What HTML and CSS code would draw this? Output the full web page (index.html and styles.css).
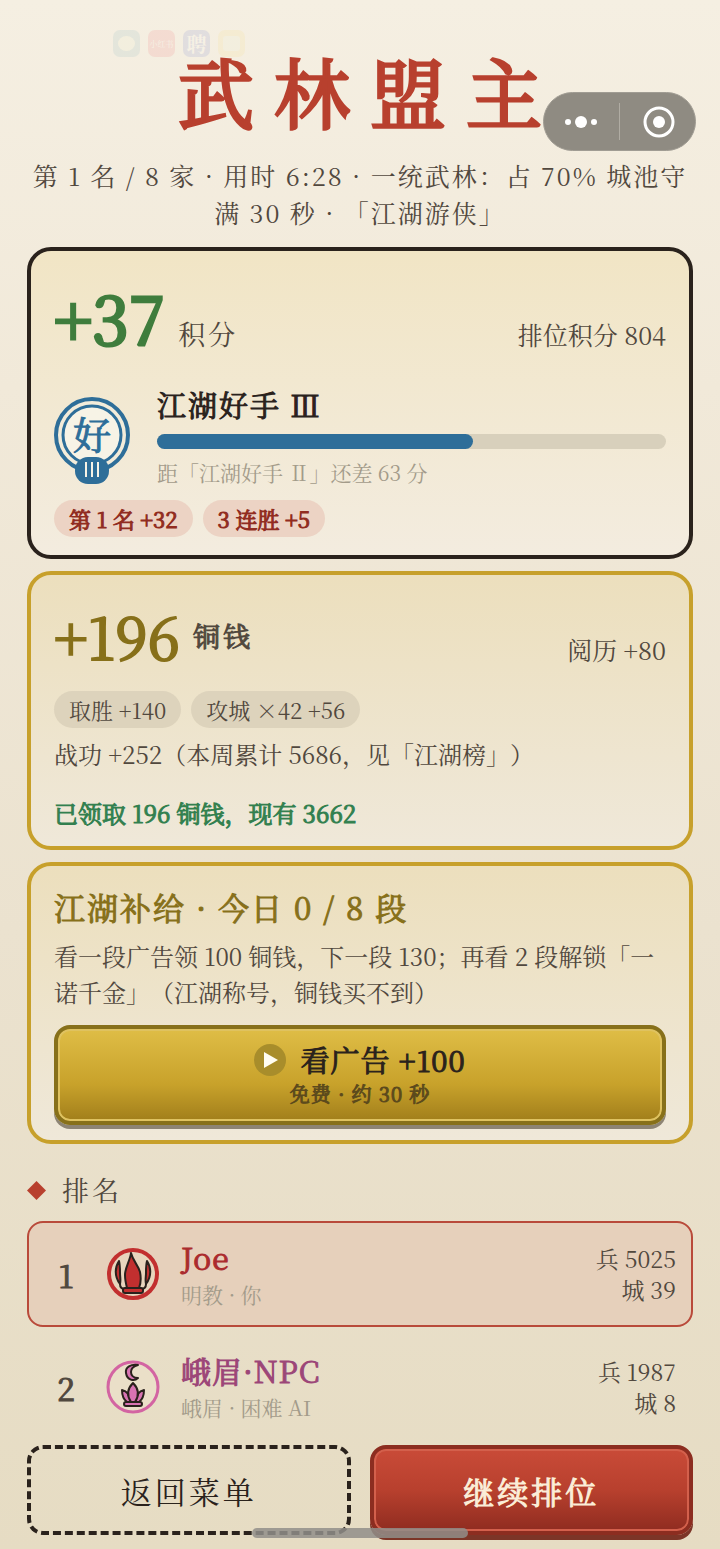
FILE: index.html
```html
<!DOCTYPE html>
<html lang="zh-CN">
<head>
    <meta charset="UTF-8">
    <meta name="viewport" content="width=device-width, initial-scale=1.0">
    <title>武林盟主</title>
    <link rel="stylesheet" href="styles.css">
</head>
<body>
    <!-- Faded status icons -->
    <div class="status-icons" aria-hidden="true">
        <span class="app app-teal"><i></i></span>
        <span class="app app-red">小红书</span>
        <span class="app app-blue">聘</span>
        <span class="app app-yellow"><i></i></span>
    </div>

    <div class="capsule">
        <button class="capsule-btn" aria-label="更多">
            <svg width="34" height="14" viewBox="0 0 34 14" fill="#fff">
                <circle cx="3" cy="7" r="3"/>
                <circle cx="16" cy="7" r="6"/>
                <circle cx="29" cy="7" r="3"/>
            </svg>
        </button>
        <button class="capsule-btn" aria-label="关闭">
            <svg width="34" height="34" viewBox="0 0 34 34">
                <circle cx="18" cy="17" r="14" fill="none" stroke="#fff" stroke-width="3"/>
                <circle cx="18" cy="17" r="6" fill="#fff"/>
            </svg>
        </button>
    </div>

    <main class="page">
        <header class="header">
            <h1>武林盟主</h1>
            <p>第 1 名 / 8 家 · 用时 6:28 · 一统武林：占 70% 城池守满 30 秒 · 「江湖游侠」</p>
        </header>

        <section class="card card-score">
            <div class="card-head">
                <div class="gain">
                    <strong class="gain-num">+37</strong>
                    <span class="gain-unit">积分</span>
                </div>
                <span class="head-note">排位积分 804</span>
            </div>
            <div class="rank">
                <svg class="badge" width="76" height="90" viewBox="0 0 76 90">
                    <circle cx="38" cy="38" r="36" fill="#f3ecda" stroke="#2e6e99" stroke-width="4"/>
                    <circle cx="38" cy="38" r="29" fill="#f7f3e6" stroke="#2e6e99" stroke-width="3"/>
                    <text class="badge-text" x="38" y="52" text-anchor="middle">好</text>
                    <rect x="21" y="60" width="34" height="27" rx="13" fill="#2e6e99"/>
                    <path d="M32 65v15M38 65v15M44 65v15" stroke="#f7f3e6" stroke-width="2"/>
                </svg>
                <div class="rank-info">
                    <h2>江湖好手 Ⅲ</h2>
                    <div class="bar"><div class="bar-fill" style="width: 62%"></div></div>
                    <p>距「江湖好手 Ⅱ」还差 63 分</p>
                </div>
            </div>
            <div class="tags">
                <span class="tag tag-red">第 1 名 +32</span>
                <span class="tag tag-red">3 连胜 +5</span>
            </div>
        </section>

        <section class="card card-coins">
            <div class="card-head">
                <div class="gain">
                    <strong class="gain-num">+196</strong>
                    <span class="gain-unit">铜钱</span>
                </div>
                <span class="head-note">阅历 +80</span>
            </div>
            <div class="tags">
                <span class="tag">取胜 +140</span>
                <span class="tag">攻城 ×42 +56</span>
            </div>
            <p class="merit">战功 +252（本周累计 5686，见「江湖榜」）</p>
            <p class="claimed">已领取 196 铜钱，现有 3662</p>
        </section>

        <section class="card card-supply">
            <h2>江湖补给 · 今日 0 / 8 段</h2>
            <p>看一段广告领 100 铜钱，下一段 130；再看 2 段解锁「一诺千金」（江湖称号，铜钱买不到）</p>
            <button class="btn-ad">
                <span class="btn-ad-main">
                    <svg width="32" height="32" viewBox="0 0 32 32">
                        <circle cx="16" cy="16" r="16" fill="#a88d2b"/>
                        <path d="M10 8v16l14-8z" fill="#fffdf2"/>
                    </svg>
                    看广告 +100
                </span>
                <small>免费 · 约 30 秒</small>
            </button>
        </section>

        <h3 class="list-title">
            <svg width="19" height="19" viewBox="0 0 20 20"><path d="M10 0L20 10 10 20 0 10z" fill="#b8402e"/></svg>
            排名
        </h3>
        <ol class="ranking">
            <li class="row row-me">
                <span class="place">1</span>
                <svg class="sect" width="54" height="54" viewBox="0 0 54 54">
                    <circle cx="27" cy="27" r="24" fill="#e8d5bd" stroke="#c22f2f" stroke-width="4"/>
                    <g fill="#c22f2f" stroke="#2a211c" stroke-width="2" stroke-linejoin="round" stroke-linecap="round">
                        <path d="M13 14c-4 6-5 15 1 23 1-4 0-7 0-11 0-5 0-8-1-12z"/>
                        <path d="M41 14c4 6 5 15-1 23-1-4 0-7 0-11 0-5 0-8 1-12z"/>
                        <path d="M14 37c0 3 2 5 5 5M40 37c0 3-2 5-5 5" fill="none"/>
                        <path d="M25 6c-1 8-6 14-6 22 0 5 1 9 2 13h12c2-5 2-11 1-16-2-7-7-11-9-19z"/>
                        <rect x="17" y="41" width="20" height="5" rx="2"/>
                    </g>
                </svg>
                <div class="who">
                    <strong class="name-red">Joe</strong>
                    <small>明教 · 你</small>
                </div>
                <div class="stats"><span>兵 5025</span><span>城 39</span></div>
            </li>
            <li class="row">
                <span class="place">2</span>
                <svg class="sect" width="54" height="54" viewBox="0 0 54 54">
                    <circle cx="27" cy="27" r="25" fill="#eadfc8" stroke="#d364a2" stroke-width="3"/>
                    <g fill="#d873b2" stroke="#2a211c" stroke-width="2" stroke-linejoin="round">
                        <path d="M32 5c-7-1-13 2-12 8 1 7 8 9 12 5-5 0-7-3-7-6 0-4 3-6 7-7z"/>
                        <path d="M21 42c-4-3-5-7-5-12 5 1 8 5 9 12zM33 42c4-3 5-7 5-12-5 1-8 5-9 12z"/>
                        <path d="M27 23c-6 6-6 13-2 19h4c4-6 4-13-2-19z"/>
                        <rect x="18" y="42" width="18" height="4" rx="2"/>
                    </g>
                </svg>
                <div class="who">
                    <strong class="name-pink">峨眉·NPC</strong>
                    <small>峨眉 · 困难 AI</small>
                </div>
                <div class="stats"><span>兵 1987</span><span>城 8</span></div>
            </li>
        </ol>

        <footer class="actions">
            <button class="btn btn-back">返回菜单</button>
            <button class="btn btn-next">继续排位</button>
        </footer>
    </main>
    <div class="home-bar"></div>
</body>
</html>
```

FILE: styles.css
```css
:root {
    --ink: #2a221c;
    --text: #51483e;
    --muted: #a39b8a;
    --red: #b8402e;
    --gold: #c7a02b;
    --dark-gold: #87701a;
    --green: #3f7d3d;
    --blue: #2e6e99;
}

* {
    box-sizing: border-box;
}

body {
    margin: 0;
    min-height: 100vh;
    position: relative;
    font-family: "Noto Serif CJK SC", "Source Han Serif SC", "Liberation Serif", "Noto Sans CJK SC", serif;
    text-spacing-trim: space-all;
    color: var(--text);
    background: linear-gradient(#f5efe2, #f1e9d9 25%, #ebe2cf 60%, #e6dcc3);
}

h1, h2, h3, p, ol {
    margin: 0;
    padding: 0;
    font-weight: normal;
}

button {
    font-family: inherit;
    cursor: pointer;
}

/* Even, brush-like bold: regular glyphs with a thin outline */
h2, strong, .tag-red, .claimed, .badge-text, .place, .card-coins .gain-unit,
.btn-ad-main, .btn-ad small, .btn-next {
    font-weight: normal;
    -webkit-text-stroke: 1px;
}

.page {
    padding: 49px 27px 14px;
}

/* Overlays */
.status-icons {
    position: absolute;
    top: 30px;
    left: 113px;
    display: flex;
    gap: 8px;
    opacity: 0.12;
}

.app {
    display: flex;
    align-items: center;
    justify-content: center;
    width: 27px;
    height: 27px;
    border-radius: 7px;
    color: #fff;
    font-size: 8px;
    line-height: 1;
    white-space: nowrap;
}

.app i {
    width: 17px;
    height: 15px;
    border-radius: 50%;
    background: #e9f5c9;
}

.app-teal { background: #6fa7b7; }
.app-red { background: #ef5a64; }
.app-blue { background: #5968cf; font-size: 20px; font-weight: bold; }
.app-yellow { background: #f8d869; }
.app-yellow i { border-radius: 3px; }

.capsule {
    position: absolute;
    top: 92px;
    right: 24px;
    display: flex;
    width: 153px;
    height: 59px;
    padding: 10px 0;
    border-radius: 30px;
    background: #8f8b82;
    border: 1px solid #a09c93;
}

.capsule-btn {
    flex: 1;
    display: flex;
    align-items: center;
    justify-content: center;
    padding: 0;
    border: none;
    background: none;
}

.capsule-btn + .capsule-btn {
    border-left: 1px solid #b0aca3;
}

.home-bar {
    position: absolute;
    bottom: 11px;
    left: 35%;
    width: 30%;
    height: 10px;
    border-radius: 5px;
    background: rgba(145, 142, 138, 0.85);
}

/* Header */
.header {
    text-align: center;
    margin-bottom: 16px;
}

h1 {
    font-size: 76px;
    line-height: 84px;
    letter-spacing: 20px;
    text-indent: 20px;
    color: var(--red);
    -webkit-text-stroke: 3px;
}

.header p {
    margin-top: 24px;
    font-size: 25px;
    line-height: 37px;
    letter-spacing: 2px;
}

/* Cards */
.card {
    padding: 18px 23px;
    margin-bottom: 12px;
    border: 4px solid var(--gold);
    border-radius: 24px;
    background: linear-gradient(#ecdfbd, #efe8d9);
}

.card-score {
    border-color: var(--ink);
    background: linear-gradient(#f1e5c5, #f3ecdf);
}

.card-head {
    display: flex;
    justify-content: space-between;
    align-items: baseline;
}

.gain {
    display: flex;
    align-items: baseline;
    gap: 13px;
}

.gain-num {
    font-size: 66px;
    line-height: 96px;
    color: var(--green);
    -webkit-text-stroke: 3px;
}

.gain-unit {
    font-size: 27px;
    letter-spacing: 3px;
}

.head-note {
    font-size: 25px;
}

.rank {
    display: flex;
    align-items: flex-end;
    gap: 27px;
    margin-top: 19px;
}

.badge-text {
    font-size: 38px;
    fill: var(--blue);
    stroke: var(--blue);
}

.rank-info {
    flex: 1;
}

.rank-info h2 {
    font-size: 29px;
    line-height: 42px;
    letter-spacing: 2px;
    color: var(--ink);
}

.bar {
    height: 15px;
    margin: 8px 0;
    border-radius: 8px;
    background: #d8d0bc;
}

.bar-fill {
    height: 100%;
    border-radius: 8px;
    background: var(--blue);
}

.rank-info p {
    font-size: 21px;
    line-height: 30px;
    color: var(--muted);
}

.tags {
    display: flex;
    gap: 10px;
    margin-top: 13px;
}

.tag {
    padding: 0 15px;
    border-radius: 19px;
    font-size: 22px;
    line-height: 37px;
    background: #ddd3bc;
}

.tag-red {
    color: #912c20;
    background: #ecd3c4;
}

.card-coins .gain-num {
    font-size: 58px;
    line-height: 84px;
    color: var(--dark-gold);
    -webkit-text-stroke: 2px;
}

.card-coins .gain-unit {
    align-self: center;
}

.card-coins .tags {
    margin-top: 14px;
}

.merit {
    margin-top: 7px;
    font-size: 24px;
    line-height: 37px;
}

.claimed {
    margin-top: 26px;
    font-size: 24px;
    line-height: 30px;
    color: #32804f;
}

.card-supply {
    padding-bottom: 15px;
}

.card-supply h2 {
    font-size: 31px;
    line-height: 46px;
    letter-spacing: 2px;
    color: var(--dark-gold);
}

.card-supply p {
    margin: 8px 0 15px;
    font-size: 24px;
    line-height: 36px;
}

.btn-ad {
    display: block;
    width: 100%;
    padding: 11px 0 13px;
    border: 4px solid var(--dark-gold);
    border-radius: 16px;
    background: linear-gradient(#dfbd46, #c8a22b 60%, #a17e1b);
    box-shadow: inset 0 0 0 2px #dfc260, 0 4px #8d8474;
    color: var(--ink);
}

.btn-ad-main {
    display: flex;
    align-items: center;
    justify-content: center;
    gap: 14px;
    font-size: 29px;
    line-height: 40px;
    letter-spacing: 1px;
}

.btn-ad small {
    display: block;
    font-size: 20px;
    line-height: 28px;
    letter-spacing: 1px;
    color: #5c4a1c;
}

/* Ranking */
.list-title {
    display: flex;
    align-items: center;
    gap: 16px;
    margin: 26px 0 11px;
    font-size: 27px;
    line-height: 40px;
    letter-spacing: 3px;
}

.ranking {
    display: flex;
    flex-direction: column;
    gap: 7px;
    list-style: none;
}

.row {
    display: flex;
    align-items: center;
    padding: 16px 15px;
    border: 2px solid transparent;
    border-radius: 16px;
}

.row-me {
    border-color: #b94a3a;
    background: #e6d0bb;
}

.place {
    width: 44px;
    font-size: 32px;
    line-height: 44px;
    text-align: center;
}

.sect {
    margin: 0 21px 0 18px;
}

.who {
    flex: 1;
}

.who strong {
    display: block;
    margin-bottom: 4px;
    font-size: 30px;
    line-height: 36px;
    letter-spacing: 1px;
}

.who small {
    display: block;
    font-size: 21px;
    line-height: 30px;
    color: var(--muted);
}

.name-red { color: #ab2c2e; }
.name-pink { color: #9c4678; }

.stats {
    display: flex;
    flex-direction: column;
    text-align: right;
    font-size: 23px;
    line-height: 31px;
}

/* Bottom buttons */
.actions {
    display: flex;
    gap: 19px;
    margin-top: 5px;
}

.btn {
    flex: 1;
    height: 90px;
    font-size: 31px;
    letter-spacing: 3px;
    border-radius: 16px;
}

.btn-back {
    border: 4px dashed var(--ink);
    background: none;
    color: var(--ink);
}

.btn-next {
    border: 4px solid #8c2d20;
    background: linear-gradient(#c94b38, #b8402e 50%, #8f2c20);
    box-shadow: inset 0 0 0 2px #d3604c, 0 5px #7c3527;
    color: #fbeed8;
}
```
